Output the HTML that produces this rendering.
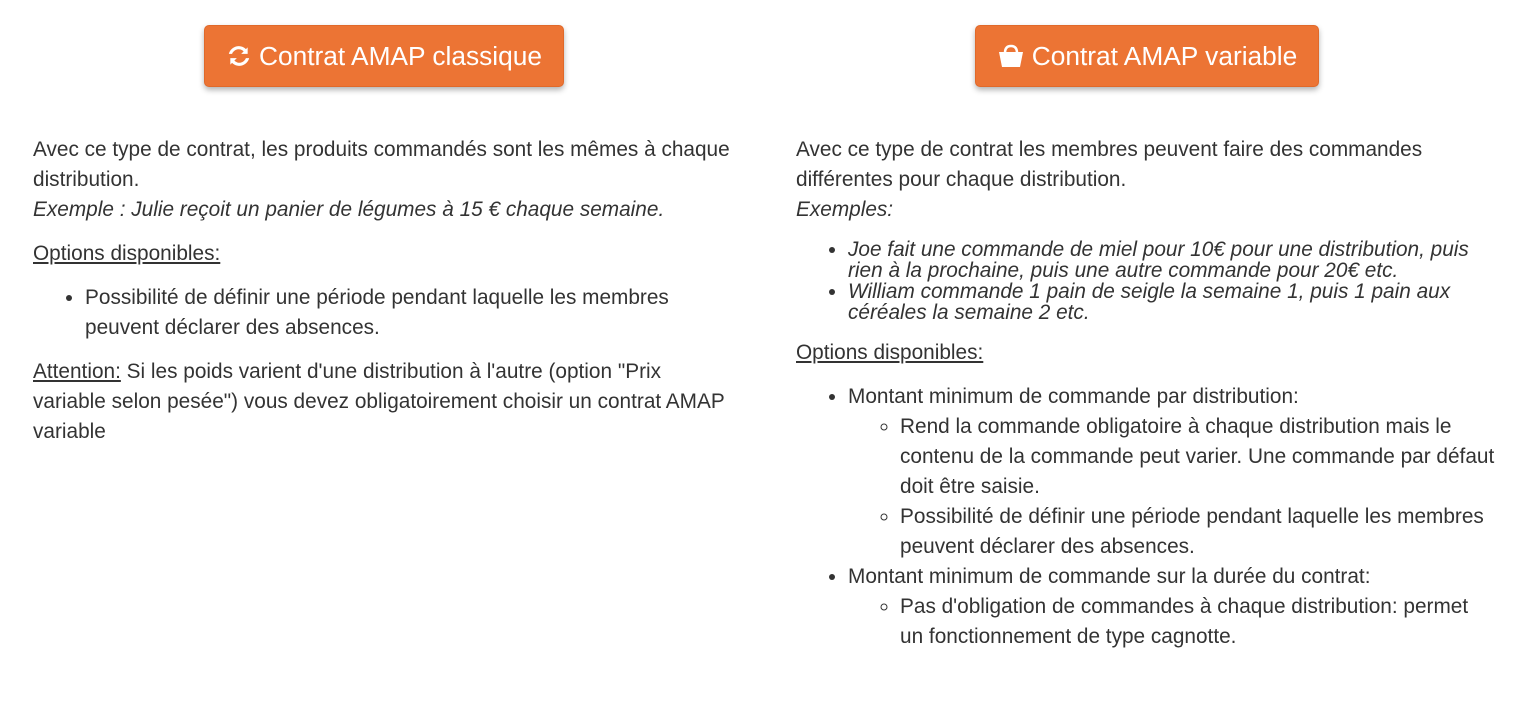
<!DOCTYPE html>
<html><head><meta charset="utf-8"><style>
body{margin:0;background:#fff;width:1517px;height:706px;overflow:hidden;font-family:"Liberation Sans",sans-serif;color:#333;font-size:20.8px;line-height:30px;position:relative}
.btn{position:absolute;top:25px;height:62px;background:#ec7434;border:1px solid #e0692a;border-radius:5px;box-sizing:border-box;color:#fff;font-size:26.3px;display:flex;align-items:center;justify-content:center;box-shadow:0 3px 6px rgba(0,0,0,.3)}
.btn svg{margin-right:7px}
.a{position:absolute}
p{margin:0}
ul{margin:0;padding:0 0 0 52px}
ul.s{list-style:circle}
ul.it{font-style:italic;line-height:21px}
</style></head><body>
<div class="btn" style="left:204px;width:360px"><svg width="26" height="26" viewBox="0 0 24 24"><path d="M20 4v6h-6l2.3-2.3A6.5 6.5 0 0 0 5.6 10H2.6A9.5 9.5 0 0 1 18.4 5.6z M4 20v-6h6l-2.3 2.3A6.5 6.5 0 0 0 18.4 14h3A9.5 9.5 0 0 1 5.6 18.4z" fill="#fff"/></svg>Contrat AMAP classique</div>
<div class="btn" style="left:975px;width:344px"><svg width="28" height="26" viewBox="0 0 28 26"><path d="M8 10 Q8 3 14 3 Q20 3 20 10" stroke="#fff" stroke-width="2.5" fill="none"/><path d="M2 9h24l-3 15H5z" fill="#fff"/></svg>Contrat AMAP variable</div>

<div class="a" style="left:33px;top:135px;width:702px">
<p>Avec ce type de contrat, les produits commandés sont les mêmes à chaque distribution.<br><i>Exemple : Julie reçoit un panier de légumes à 15 € chaque semaine.</i></p>
<p style="margin-top:14px"><u>Options disponibles:</u></p>
<ul style="margin-top:14px"><li>Possibilité de définir une période pendant laquelle les membres peuvent déclarer des absences.</li></ul>
<p style="margin-top:14px"><u>Attention:</u> Si les poids varient d'une distribution à l'autre (option "Prix variable selon pesée") vous devez obligatoirement choisir un contrat AMAP variable</p>
</div>

<div class="a" style="left:796px;top:135px;width:710px">
<p>Avec ce type de contrat les membres peuvent faire des commandes différentes pour chaque distribution.<br><i>Exemples:</i></p>
<ul class="it" style="margin-top:14px"><li>Joe fait une commande de miel pour 10€ pour une distribution, puis rien à la prochaine, puis une autre commande pour 20€ etc.</li><li>William commande 1 pain de seigle la semaine 1, puis 1 pain aux céréales la semaine 2 etc.</li></ul>
<p style="margin-top:15px"><u>Options disponibles:</u></p>
<ul style="margin-top:14px"><li>Montant minimum de commande par distribution:
<ul class="s"><li>Rend la commande obligatoire à chaque distribution mais le contenu de la commande peut varier. Une commande par défaut doit être saisie.</li><li>Possibilité de définir une période pendant laquelle les membres peuvent déclarer des absences.</li></ul></li>
<li>Montant minimum de commande sur la durée du contrat:
<ul class="s"><li>Pas d'obligation de commandes à chaque distribution: permet<br>un fonctionnement de type cagnotte.</li></ul></li></ul>
</div>
</body></html>
